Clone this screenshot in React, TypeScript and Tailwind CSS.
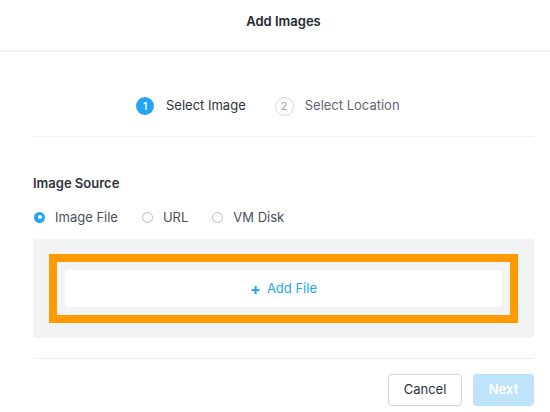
import React from 'react';

const Radio = ({ checked, label }: { checked?: boolean; label: string }) => (
  <label className="flex items-center gap-[10px]">
    {checked ? (
      <span className="flex h-[11px] w-[11px] items-center justify-center rounded-full bg-[#22a5f7]">
        <span className="h-[4px] w-[4px] rounded-full bg-white" />
      </span>
    ) : (
      <span className="h-[11px] w-[11px] rounded-full border border-[#b8bec6] bg-white" />
    )}
    <span className="text-[13px] leading-[16px] text-[#4a4f58]">{label}</span>
  </label>
);

const App = () => {
  return (
    <div
      className="h-[412px] w-[550px] overflow-hidden bg-white"
      style={{ fontFamily: 'Inter, "Open Sans", sans-serif' }}
    >
      <div className="w-[567px]">
        {/* Header */}
        <div className="h-[52px] border-b-2 border-[#f0f1f2] pt-[13px] text-center">
          <h2 className="text-[13px] font-semibold leading-[16px] text-[#22272e]">Add Images</h2>
        </div>

        <div className="px-[33px]">
          {/* Stepper */}
          <div className="ml-[103px] mt-[45px] flex h-[18px] items-center">
            <span className="flex h-[18px] w-[18px] items-center justify-center rounded-full bg-[#22a5f7] text-[10px] font-semibold text-white">
              1
            </span>
            <span className="ml-[12px] text-[13px] text-[#2e333b]">Select Image</span>
            <span className="ml-[29px] flex h-[19px] w-[19px] items-center justify-center rounded-full border border-[#d3d7dd] text-[11px] text-[#a2a8b1]">
              2
            </span>
            <span className="ml-[11px] text-[13px] text-[#5f6672]">Select Location</span>
          </div>
          <div className="mt-[21px] h-px bg-[#eceef0]" />

          {/* Image source */}
          <h3 className="mt-[38px] text-[13px] font-semibold leading-[16px] text-[#2e333b]">Image Source</h3>
          <div className="mt-[18px] flex items-center gap-[24px] pl-px">
            <Radio checked label="Image File" />
            <Radio label="URL" />
            <Radio label="VM Disk" />
          </div>

          <div className="mt-[14px] rounded-[3px] bg-[#f2f3f5] py-[15px] pl-[16px] pr-[16px]">
            <div className="border-[8px] border-[#ff9a00] p-[8px]">
              <button className="flex h-[37px] w-full items-center justify-center gap-[6px] rounded-[3px] bg-white text-[13px] text-[#22a5f7]">
                <span className="text-[16px] font-bold leading-none">+</span>
                <span>Add File</span>
              </button>
            </div>
          </div>

          <div className="mt-[20px] h-px bg-[#eceef0]" />

          {/* Footer */}
          <div className="mt-[15px] flex justify-end gap-[11px]">
            <button className="h-[32px] w-[74px] rounded-[4px] border border-[#cfd3d8] bg-white text-[13px] text-[#2e333b]">
              Cancel
            </button>
            <button className="h-[32px] w-[61px] rounded-[4px] bg-[#bfe3fb] text-[13px] font-semibold text-white">
              Next
            </button>
          </div>
        </div>
      </div>
    </div>
  );
};

export default App;
